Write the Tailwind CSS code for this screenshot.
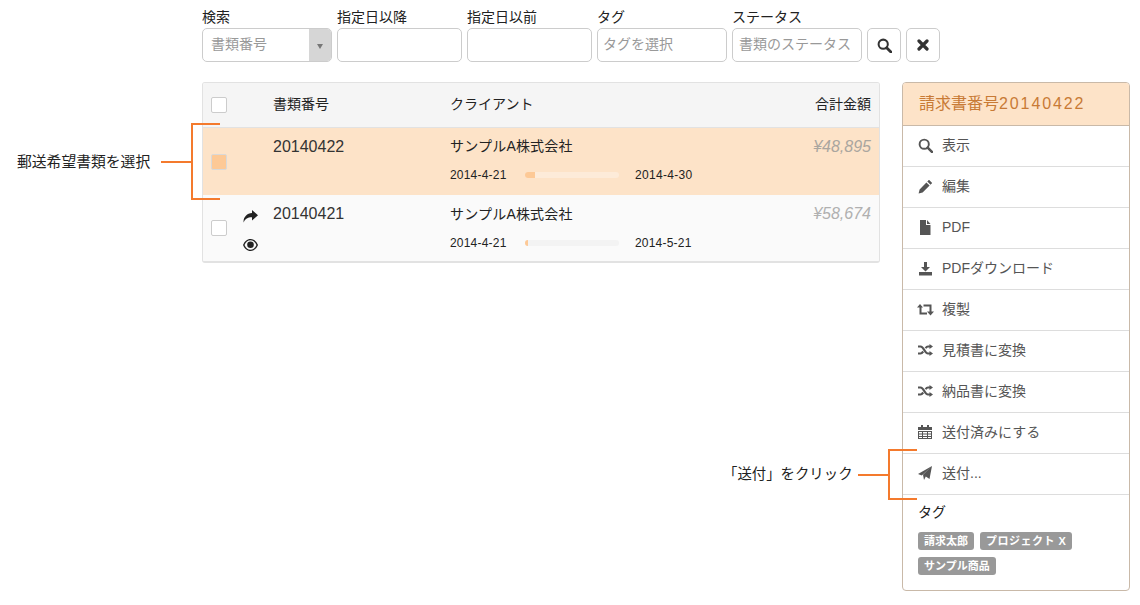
<!DOCTYPE html>
<html lang="ja">
<head>
  <meta charset="UTF-8" />
  <title>請求書</title>
  <script src="https://cdn.jsdelivr.net/npm/@tailwindcss/browser@4"></script>
</head>
<body class="bg-white">
<div class="relative w-[1140px] h-[605px] overflow-hidden pl-[202px] pt-[8px] text-[14px] text-[#222] font-['Liberation_Sans','Noto_Sans_CJK_JP',sans-serif]">

  <!-- 検索フォーム -->
  <div class="flex items-end gap-[5px] h-[54px]">
    <div class="w-[130px]">
      <div class="h-[20px] leading-[18px]">検索</div>
      <div class="flex h-[34px] rounded-[5px] border border-[#ccc] overflow-hidden">
        <div class="flex-1 pl-[8px] leading-[30px] text-[#999]">書類番号</div>
        <div class="w-[22px] bg-[#d6d6d6] flex items-center justify-center">
          <div class="w-0 h-0 mt-[2px] border-x-[3px] border-x-transparent border-t-[5px] border-t-[#777]"></div>
        </div>
      </div>
    </div>
    <div class="w-[125px]">
      <div class="h-[20px] leading-[18px]">指定日以降</div>
      <div class="h-[34px] rounded-[5px] border border-[#ccc]"></div>
    </div>
    <div class="w-[125px]">
      <div class="h-[20px] leading-[18px]">指定日以前</div>
      <div class="h-[34px] rounded-[5px] border border-[#ccc]"></div>
    </div>
    <div class="w-[130px]">
      <div class="h-[20px] leading-[18px]">タグ</div>
      <div class="h-[34px] rounded-[5px] border border-[#ccc] pl-[5px] leading-[30px] text-[#999]">タグを選択</div>
    </div>
    <div class="w-[130px]">
      <div class="h-[20px] leading-[18px]">ステータス</div>
      <div class="h-[34px] rounded-[5px] border border-[#ccc] pl-[6px] leading-[30px] text-[#999] whitespace-nowrap">書類のステータス</div>
    </div>
    <div class="w-[34px] h-[34px] rounded-[5px] border border-[#ccc] flex items-center justify-center">
      <svg width="15" height="15" viewBox="0 0 14 14" fill="none" stroke="#333"><circle cx="5.800" cy="5.800" r="4.300" stroke-width="1.900"/><path d="M9 9l4 4" stroke-width="2.600" stroke-linecap="round"/></svg>
    </div>
    <div class="w-[34px] h-[34px] rounded-[5px] border border-[#ccc] flex items-center justify-center">
      <svg width="12" height="12" viewBox="0 0 12 12" fill="none" stroke="#333"><path d="M2 2l8 8M10 2l-8 8" stroke-width="3.200" stroke-linecap="round"/></svg>
    </div>
  </div>

  <div class="flex items-start gap-[22px] mt-[20px]">
    <!-- 書類一覧 -->
    <div class="w-[678px] h-[181px] rounded-[3px] border border-[#e2e2e2] border-b-2 overflow-hidden">
      <div class="flex items-center h-[45px] pb-[1px] bg-[#f5f5f5] border-b border-[#e2e2e2]">
        <div class="ml-[8px] w-[16px] h-[16px] border border-[#ccc] rounded-[2px] bg-white"></div>
        <div class="ml-[46px] w-[177px]">書類番号</div>
        <div>クライアント</div>
        <div class="ml-auto mr-[8px]">合計金額</div>
      </div>

      <div class="relative h-[67px] bg-[#fde3c8]">
        <div class="absolute left-[8px] top-[26px] w-[16px] h-[16px] border border-[#d9d9d9] rounded-[2px] bg-[#fdc996]"></div>
        <div class="flex pt-[9px] pl-[70px]">
          <div class="w-[177px] mt-[1px] text-[16px] leading-[18px] text-[#333]">20140422</div>
          <div>
            <div class="leading-[18px] tracking-[0.2px]">サンプルA株式会社</div>
            <div class="flex items-center mt-[12px] text-[12px] leading-[16px]">
              <div class="w-[75px] tracking-[0.2px]">2014-4-21</div>
              <div class="w-[94px] h-[6px] rounded-[3px] bg-[#fdebd9] overflow-hidden"><div class="w-[10px] h-[6px] bg-[#fdc996]"></div></div>
              <div class="ml-[16px] tracking-[0.3px]">2014-4-30</div>
            </div>
          </div>
          <div class="ml-auto mr-[8px] mt-[1px] text-[16px] leading-[18px] italic text-[#aaa69f]">¥48,895</div>
        </div>
      </div>

      <div class="relative h-[66px] bg-[#fafafa]">
        <div class="absolute left-[8px] top-[25px] w-[16px] h-[16px] border border-[#ccc] rounded-[2px] bg-white"></div>
        <svg class="absolute left-[40px] top-[15px]" width="15" height="13" viewBox="0 0 15 13" fill="#222"><path d="M9 0l6 5.200-6 5.200V7.300C5 7.200 2.200 8.600.6 12.600.1 7.500 3.800 3.400 9 3.100z"/></svg>
        <svg class="absolute left-[40px] top-[44px]" width="15" height="12" viewBox="0 0 15 12"><path d="M7.500 0C4 0 1.500 2.500 0 6c1.500 3.500 4 6 7.500 6S13.500 9.500 15 6C13.500 2.500 11 0 7.500 0z" fill="#222"/><path d="M7.500 1.200C4.800 1.200 2.800 3.200 1.500 6c1.300 2.800 3.300 4.800 6 4.800s4.700-2 6-4.800c-1.300-2.800-3.300-4.800-6-4.800z" fill="#fafafa"/><circle cx="7.500" cy="5.800" r="3.300" fill="#222"/></svg>
        <div class="flex pt-[10px] pl-[70px]">
          <div class="w-[177px] text-[16px] leading-[18px] text-[#333]">20140421</div>
          <div>
            <div class="leading-[18px] tracking-[0.2px]">サンプルA株式会社</div>
            <div class="flex items-center mt-[12px] text-[12px] leading-[16px]">
              <div class="w-[75px] tracking-[0.2px]">2014-4-21</div>
              <div class="w-[94px] h-[6px] rounded-[3px] bg-[#f3f3f3] overflow-hidden"><div class="w-[3px] h-[6px] bg-[#fdc996]"></div></div>
              <div class="ml-[16px] tracking-[0.2px]">2014-5-21</div>
            </div>
          </div>
          <div class="ml-auto mr-[8px] text-[16px] leading-[18px] italic text-[#b0b0b0]">¥58,674</div>
        </div>
      </div>
    </div>

    <!-- サイドパネル -->
    <div class="w-[228px] h-[509px] rounded-[4px] border border-[#c9b9a8] overflow-hidden text-[#555]">
      <div class="h-[43px] bg-[#fde3c8] border-b border-[#c9b9a8] pl-[16px] text-[16px] leading-[41px] text-[#c87a35]">請求書番号<span class="tracking-[1.900px]">20140422</span></div>

      <div class="flex items-center h-[41px] pb-[2px] border-b border-[#ddd]">
        <svg class="ml-[15px]" width="15" height="15" viewBox="0 0 14 14" fill="none" stroke="#555"><circle cx="5.800" cy="5.800" r="4.300" stroke-width="1.800"/><path d="M9 9l4 4" stroke-width="2.400" stroke-linecap="round"/></svg>
        <span class="ml-[9px]">表示</span>
      </div>
      <div class="flex items-center h-[41px] pb-[2px] border-b border-[#ddd]">
        <svg class="ml-[15px]" width="15" height="15" viewBox="0 0 15 15" fill="#555"><path d="M11 .8l3.200 3.200-1.700 1.700-3.200-3.200zM8.400 3.400l3.200 3.200-7 7-4 1 1-4z"/></svg>
        <span class="ml-[9px]">編集</span>
      </div>
      <div class="flex items-center h-[41px] pb-[2px] border-b border-[#ddd]">
        <svg class="ml-[15px]" width="15" height="15" viewBox="0 0 15 15" fill="#555"><path d="M2 0h6v5h4.500v10H2zM9 0l3.500 4H9z"/></svg>
        <span class="ml-[9px]">PDF</span>
      </div>
      <div class="flex items-center h-[41px] pb-[2px] border-b border-[#ddd]">
        <svg class="ml-[15px]" width="15" height="15" viewBox="0 0 15 15" fill="#555"><path d="M6 1h3v5h3l-4.500 4.500L3 6h3zM1 11h13v3.500H1z"/></svg>
        <span class="ml-[9px]">PDFダウンロード</span>
      </div>
      <div class="flex items-center h-[41px] pb-[2px] border-b border-[#ddd]">
        <svg class="ml-[14px]" width="17" height="13" viewBox="0 0 17 13" fill="#555"><path d="M3 1L6 4.500H4.500V9.500H10V11.500H2.500V4.500H0zM6.500 1.500H14.500V8.500H17L13.500 12.500 10 8.500H12.500V3.500H6.500z"/></svg>
        <span class="ml-[8px]">複製</span>
      </div>
      <div class="flex items-center h-[41px] pb-[2px] border-b border-[#ddd]">
        <svg class="ml-[15px]" width="15" height="12" viewBox="0 0 15 12" fill="none" stroke="#555" stroke-width="2.200"><path d="M0 2.500h2.500c3.500 0 4 7 7.500 7h2M0 9.500h2.500c1.200 0 2-1 2.700-2M7.600 4.300C8.200 3.300 9 2.500 10 2.500h2"/><path d="M11.500 0L15 2.500 11.500 5zM11.500 7L15 9.500 11.500 12z" fill="#555" stroke="none"/></svg>
        <span class="ml-[9px]">見積書に変換</span>
      </div>
      <div class="flex items-center h-[41px] pb-[2px] border-b border-[#ddd]">
        <svg class="ml-[15px]" width="15" height="12" viewBox="0 0 15 12" fill="none" stroke="#555" stroke-width="2.200"><path d="M0 2.500h2.500c3.500 0 4 7 7.500 7h2M0 9.500h2.500c1.200 0 2-1 2.700-2M7.600 4.300C8.200 3.300 9 2.500 10 2.500h2"/><path d="M11.500 0L15 2.500 11.500 5zM11.500 7L15 9.500 11.500 12z" fill="#555" stroke="none"/></svg>
        <span class="ml-[9px]">納品書に変換</span>
      </div>
      <div class="flex items-center h-[41px] pb-[2px] border-b border-[#ddd]">
        <svg class="ml-[15px]" width="14" height="14" viewBox="0 0 14 14" fill="#555"><path d="M3 0h2v2h4V0h2v2h3v3H0V2h3zM0 6h14v8H0zM1 7v1.500h3V7zM5 7v1.500h4V7zM10 7v1.500h3V7zM1 9.500V11h3V9.500zM5 9.500V11h4V9.500zM10 9.500V11h3V9.500zM1 12v1h3v-1zM5 12v1h4v-1zM10 12v1h3v-1z" fill-rule="evenodd"/></svg>
        <span class="ml-[10px]">送付済みにする</span>
      </div>
      <div class="flex items-center h-[41px] pb-[2px] border-b border-[#ddd]">
        <svg class="ml-[15px]" width="14" height="14" viewBox="0 0 14 14" fill="#555"><path d="M14 0L11.500 13 7.800 10.500 6 14 5 8.800zM14 0L0 8l3.800 1.500z"/></svg>
        <span class="ml-[10px]">送付...</span>
      </div>

      <div class="pl-[15px] pt-[8px]">
        <div class="text-[#222] leading-[18px]">タグ</div>
        <div class="flex flex-wrap gap-x-[6px] gap-y-[7px] mt-[11px] w-[190px]">
          <span class="h-[18px] px-[6px] rounded-[3px] bg-[#999] text-white text-[11px] font-bold leading-[18px]">請求太郎</span>
          <span class="h-[18px] px-[6px] rounded-[3px] bg-[#999] text-white text-[11px] font-bold leading-[18px] tracking-[0.5px]">プロジェクト X</span>
          <span class="h-[18px] px-[6px] rounded-[3px] bg-[#999] text-white text-[11px] font-bold leading-[18px]">サンプル商品</span>
        </div>
      </div>
    </div>
  </div>

  <!-- 注釈 -->
  <div class="absolute left-[17px] top-[153px] text-[14.800px] leading-[18px] whitespace-nowrap">郵送希望書類を選択</div>
  <div class="absolute left-[161px] top-[161px] w-[30px] h-[2px] bg-[#f47a2d]"></div>
  <div class="absolute left-[191px] top-[123px] w-[29px] h-[77px] border-l-2 border-y-2 border-[#f47a2d]"></div>

  <div class="absolute left-[723px] top-[465px] text-[14.400px] leading-[18px] whitespace-nowrap">「送付」をクリック</div>
  <div class="absolute left-[858px] top-[474px] w-[30px] h-[2px] bg-[#f47a2d]"></div>
  <div class="absolute left-[888px] top-[449px] w-[29px] h-[51px] border-l-2 border-y-2 border-[#f47a2d]"></div>
</div>
</body>
</html>
